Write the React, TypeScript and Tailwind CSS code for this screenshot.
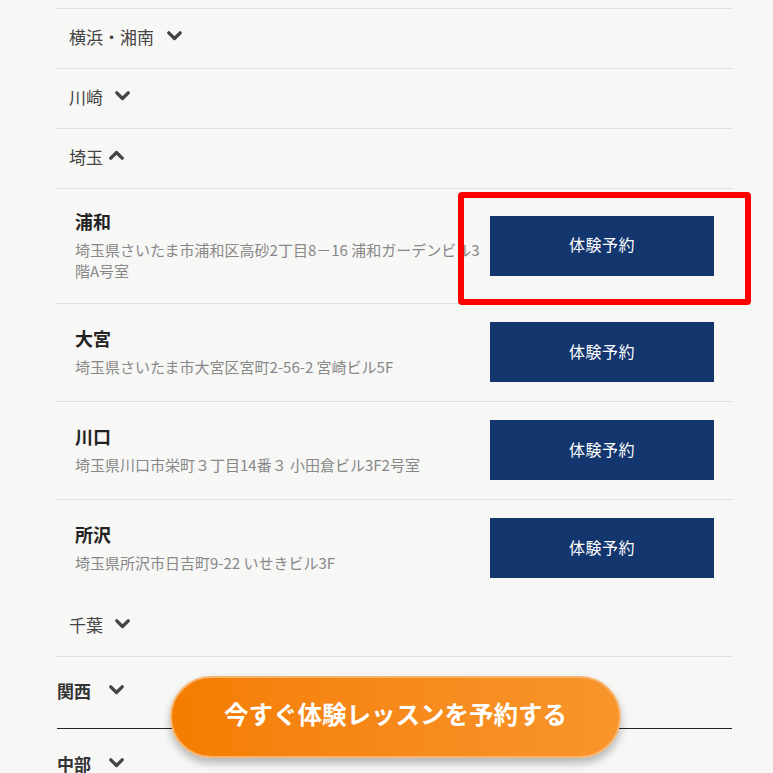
import React from "react";

const FONT = { fontFamily: '"Noto Sans CJK JP", "Noto Sans", sans-serif' };

function ChevronDown({ className = "" }: { className?: string }) {
  return (
    <svg width="15" height="10" viewBox="0 0 15 10" className={className}>
      <path d="M1.8 1.8 L7.5 7.5 L13.2 1.8" fill="none" stroke="#444" strokeWidth="3.3" strokeLinecap="round" strokeLinejoin="round" />
    </svg>
  );
}

function ChevronUp({ className = "" }: { className?: string }) {
  return (
    <svg width="15" height="10" viewBox="0 0 15 10" className={className}>
      <path d="M1.8 8.2 L7.5 2.5 L13.2 8.2" fill="none" stroke="#444" strokeWidth="3.3" strokeLinecap="round" strokeLinejoin="round" />
    </svg>
  );
}

type Shop = { name: string; address: React.ReactNode };

const shops: Shop[] = [
  {
    name: "浦和",
    address: (
      <>
        埼玉県さいたま市浦和区高砂2丁目8－16 浦和ガーデンビル3
        <br />
        階A号室
      </>
    ),
  },
  { name: "大宮", address: "埼玉県さいたま市大宮区宮町2-56-2 宮崎ビル5F" },
  { name: "川口", address: "埼玉県川口市栄町３丁目14番３ 小田倉ビル3F2号室" },
  { name: "所沢", address: "埼玉県所沢市日吉町9-22 いせきビル3F" },
];

function ShopRow({ shop }: { shop: Shop }) {
  return (
    <div className="flex items-center justify-between border-t border-[#dedede] pl-[18px] pr-[18px] pt-[18px] pb-[19px]">
      <div className="flex-1 min-w-0 pb-[3px]">
        <div className="text-[18px] font-bold text-[#222] leading-[28px]">{shop.name}</div>
        <div className="mt-[4px] text-[15px] text-[#888] leading-[21px] whitespace-nowrap">{shop.address}</div>
      </div>
      <button className="w-[224px] h-[60px] shrink-0 bg-[#13366f] text-white text-[16px] tracking-[0.5px] flex items-center justify-center pb-[3px]">
        体験予約
      </button>
    </div>
  );
}

export default function App() {
  return (
    <div className="relative w-[773px] h-[773px] overflow-hidden bg-[#f7f7f6]" style={FONT}>
      <div className="pt-[8px] ml-[57px] w-[675px]">
        <div className="h-[60px] flex items-center gap-[13px] pl-[12px] pb-[4px] border-t border-[#dedede]">
          <span className="text-[17px] text-[#444] leading-none">横浜・湘南</span>
          <ChevronDown className="-mt-[1px]" />
        </div>
        <div className="h-[60px] flex items-center gap-[12px] pl-[12px] pb-[4px] border-t border-[#dedede]">
          <span className="text-[17px] text-[#444] leading-none">川崎</span>
          <ChevronDown className="-mt-[1px]" />
        </div>
        <div className="h-[60px] flex items-center gap-[6px] pl-[12px] pb-[4px] border-t border-[#dedede]">
          <span className="text-[17px] text-[#444] leading-none">埼玉</span>
          <ChevronUp className="-mt-[4px]" />
        </div>

        {shops.map((s) => (
          <ShopRow key={s.name} shop={s} />
        ))}

        <div className="h-[60px] flex items-center gap-[12px] pl-[12px] pb-[4px] border-b border-[#dedede]">
          <span className="text-[17px] text-[#444] leading-none">千葉</span>
          <ChevronDown className="-mt-[1px]" />
        </div>

        <div className="h-[72px] flex items-center gap-[18px] pb-[4px] border-b border-[#222]">
          <span className="text-[17px] font-bold text-[#333] leading-none">関西</span>
          <ChevronDown className="-mt-[1px]" />
        </div>
        <div className="h-[72px] flex items-center gap-[18px] pb-[4px]">
          <span className="text-[17px] font-bold text-[#333] leading-none">中部</span>
          <ChevronDown className="-mt-[1px]" />
        </div>
      </div>

      {/* red annotation box (overlay) */}
      <div className="absolute left-[458px] top-[192px] w-[293px] h-[113px] border-[6px] border-[#ff0000] rounded-[4px] pointer-events-none" />

      {/* floating CTA (overlay) */}
      <button className="absolute left-[170px] top-[676px] w-[451px] h-[82px] rounded-full border-2 border-[#f8b36d] bg-gradient-to-r from-[#f47d00] to-[#f8952a] shadow-[0_5px_9px_rgba(0,0,0,0.28)] flex items-center justify-center pb-[6px]">
        <span className="text-white font-bold text-[24.5px] leading-none">今すぐ体験レッスンを予約する</span>
      </button>
    </div>
  );
}
